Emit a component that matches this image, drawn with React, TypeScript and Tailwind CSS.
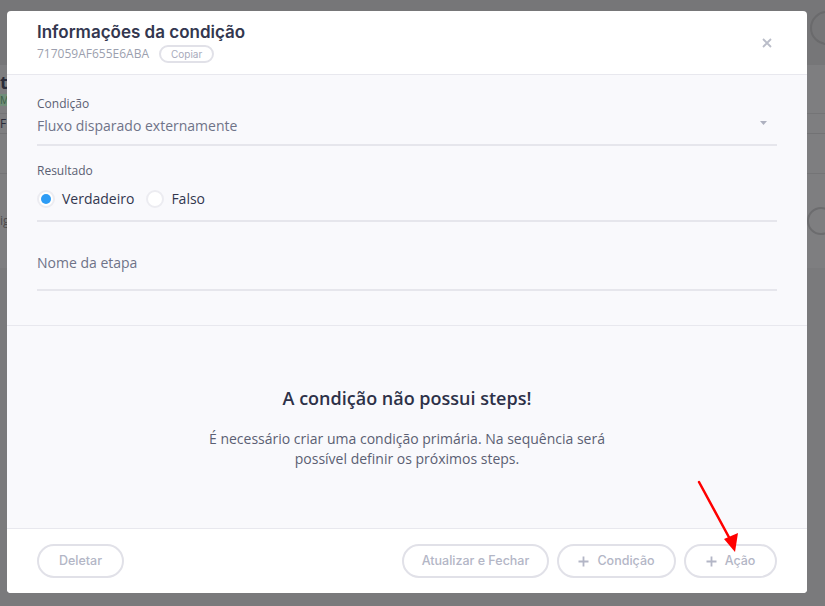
import React from "react";

const sans = { fontFamily: '"Open Sans", "Noto Sans", sans-serif' };
const head = { fontFamily: 'Inter, "Open Sans", sans-serif' };

function Radio({ checked }: { checked?: boolean }) {
  return (
    <span className="flex h-[18px] w-[18px] items-center justify-center rounded-full border-2 border-[#ececf1] bg-white">
      {checked && <span className="h-[10px] w-[10px] rounded-full bg-[#2d9cf5]" />}
    </span>
  );
}

function Btn({ w, plus, children }: { w: string; plus?: boolean; children: React.ReactNode }) {
  return (
    <button
      className={`flex h-[34px] items-center justify-center gap-[8px] rounded-full border-2 border-[#e1e1e8] bg-white text-[12.5px] font-medium text-[#b3b6c6] ${w}`}
      style={head}
    >
      {plus && (
        <svg width="11" height="11" viewBox="0 0 11 11">
          <path d="M5.5 0.5v10M0.5 5.5h10" stroke="#b3b6c6" strokeWidth="1.8" />
        </svg>
      )}
      {children}
    </button>
  );
}

export default function App() {
  return (
    <div className="relative h-[606px] w-[825px] overflow-hidden bg-[#7a7a7c]" style={sans}>
      {/* dimmed page behind */}
      <div className="flex h-full flex-col">
        <div className="h-[65px] bg-[#767678]" />
        <div className="flex h-[203px] flex-col bg-[#7e7e80]">
          <div className="flex h-[48px] flex-col justify-center pl-0">
            <span className="text-[18px] font-bold leading-[20px] text-[#2a2c3a]">tu</span>
            <span className="mt-[2px] w-[14px] bg-[#6f8d78] text-[10px] leading-[12px] text-[#3b5e45]">M</span>
          </div>
          <div className="h-px bg-[#747476]" />
          <div className="flex h-[20px] items-center border-b border-[#727274] text-[12px] text-[#2a2c3a]">F</div>
          <div className="h-[40px] border-b border-[#747476]" />
          <div className="flex flex-1 items-center justify-between text-[12px] text-[#4a4a4c]">
            <span>ig</span>
            <span className="flex gap-[6px] pr-[0px]">
              <span className="h-[28px] w-[28px] translate-x-[10px] rounded-full border-2 border-[#6c6c6e]" />
              <span className="h-[28px] w-[28px] translate-x-[10px] rounded-full border-2 border-[#6c6c6e]" />
            </span>
          </div>
        </div>
        <div className="flex-1 bg-[#7a7a7c]" />
      </div>
      <span className="absolute left-[810px] top-[11px] h-[34px] w-[34px] rounded-full border-2 border-[#6a6a6c]" />

      {/* modal */}
      <div className="absolute left-[7px] top-[11px] flex h-[582px] w-[800px] flex-col overflow-hidden rounded-[4px] bg-white">
        <div className="relative h-[64px] border-b border-[#e8e8ee] px-[30px] pt-[10px]">
          <div className="text-[17px] font-semibold leading-[22px] text-[#33374f]" style={head}>
            Informações da condição
          </div>
          <div className="mt-[2px] flex items-center gap-[10px]">
            <span className="text-[12px] leading-[18px] text-[#9c9fae]">717059AF655E6ABA</span>
            <span className="flex h-[18px] items-center rounded-full border-2 border-[#e1e1e8] px-[10px] text-[10px] text-[#a7aabb]" style={head}>
              Copiar
            </span>
          </div>
          <svg className="absolute right-[35px] top-[27px]" width="10" height="10" viewBox="0 0 10 10">
            <path d="M1 1l8 8M9 1l-8 8" stroke="#babdc9" strokeWidth="1.8" />
          </svg>
        </div>

        <div className="flex flex-1 flex-col bg-[#f9f9fc]">
          <div className="border-b border-[#e8e8ee] px-[30px] pb-[34px] pt-[21px]">
            <div className="text-[12px] leading-[16px] text-[#5b5f73]">Condição</div>
            <div className="mt-[4px] flex items-center justify-between border-b-2 border-[#e6e6ec] pb-[8px]">
              <span className="text-[14px] leading-[20px] text-[#6f7388]">Fluxo disparado externamente</span>
              <svg className="mr-[10px] mt-[-6px]" width="7" height="4" viewBox="0 0 7 4">
                <path d="M0 0h7L3.5 4z" fill="#aeb1bf" />
              </svg>
            </div>
            <div className="mt-[17px] text-[12px] leading-[16px] text-[#5b5f73]">Resultado</div>
            <div className="mt-[10px] flex items-center border-b-2 border-[#e6e6ec] pb-[11px]">
              <div className="flex items-center gap-[7px]">
                <Radio checked />
                <span className="text-[14px] leading-[20px] text-[#33374f]">Verdadeiro</span>
              </div>
              <div className="ml-[12px] flex items-center gap-[7px]">
                <Radio />
                <span className="text-[14px] leading-[20px] text-[#33374f]">Falso</span>
              </div>
            </div>
            <div className="mt-[28px] border-b-2 border-[#e6e6ec] pb-[15px]">
              <span className="text-[14px] leading-[20px] text-[#6f7388]">Nome da etapa</span>
            </div>
          </div>

          <div className="flex flex-col items-center pt-[59px]">
            <div className="text-[18px] font-semibold leading-[26px] text-[#2d3148]">
              A condição não possui steps!
            </div>
            <p className="mt-[18px] max-w-[430px] text-center text-[14px] leading-[20px] text-[#5b5f73]">
              É necessário criar uma condição primária. Na sequência será possível definir os próximos steps.
            </p>
          </div>
        </div>

        <div className="flex h-[65px] items-center justify-between border-t border-[#e8e8ee] bg-white px-[30px]">
          <Btn w="w-[87px]">Deletar</Btn>
          <div className="flex items-center gap-[8px]">
            <Btn w="w-[147px]">Atualizar e Fechar</Btn>
            <Btn w="w-[119px]" plus>
              Condição
            </Btn>
            <Btn w="w-[93px]" plus>
              Ação
            </Btn>
          </div>
        </div>
      </div>

      {/* red annotation arrow */}
      <svg className="absolute left-0 top-0" width="825" height="606" viewBox="0 0 825 606">
        <path d="M699 482L731 541" stroke="#f00" strokeWidth="2.5" strokeLinecap="round" />
        <path d="M724 539L738 533L735 552Z" fill="#f00" />
      </svg>
    </div>
  );
}
